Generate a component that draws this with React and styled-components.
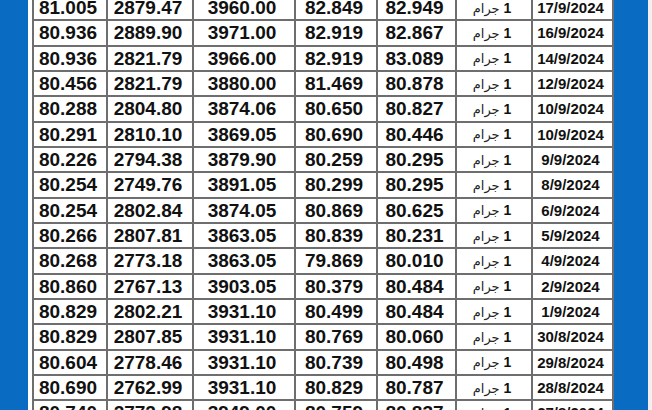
import React from "react";
import styled, { createGlobalStyle } from "styled-components";

const GlobalStyle = createGlobalStyle`
  html, body {
    margin: 0;
    padding: 0;
    background: #ffffff;
  }
  body {
    font-family: "Liberation Sans", Arial, "DejaVu Sans", sans-serif;
  }
`;

const rows = [
  ["81.005", "2879.47", "3960.00", "82.849", "82.949", "17/9/2024"],
  ["80.936", "2889.90", "3971.00", "82.919", "82.867", "16/9/2024"],
  ["80.936", "2821.79", "3966.00", "82.919", "83.089", "14/9/2024"],
  ["80.456", "2821.79", "3880.00", "81.469", "80.878", "12/9/2024"],
  ["80.288", "2804.80", "3874.06", "80.650", "80.827", "10/9/2024"],
  ["80.291", "2810.10", "3869.05", "80.690", "80.446", "10/9/2024"],
  ["80.226", "2794.38", "3879.90", "80.259", "80.295", "9/9/2024"],
  ["80.254", "2749.76", "3891.05", "80.299", "80.295", "8/9/2024"],
  ["80.254", "2802.84", "3874.05", "80.869", "80.625", "6/9/2024"],
  ["80.266", "2807.81", "3863.05", "80.839", "80.231", "5/9/2024"],
  ["80.268", "2773.18", "3863.05", "79.869", "80.010", "4/9/2024"],
  ["80.860", "2767.13", "3903.05", "80.379", "80.484", "2/9/2024"],
  ["80.829", "2802.21", "3931.10", "80.499", "80.484", "1/9/2024"],
  ["80.829", "2807.85", "3931.10", "80.769", "80.060", "30/8/2024"],
  ["80.604", "2778.46", "3931.10", "80.739", "80.498", "29/8/2024"],
  ["80.690", "2762.99", "3931.10", "80.829", "80.787", "28/8/2024"],
  ["80.740", "2772.98", "3949.00", "80.759", "80.837", "27/8/2024"],
];

const colWidths = [74, 86, 102, 82, 79, 76, 81];

const Page = styled.div`
  display: flex;
  width: 652px;
  height: 410px;
  overflow: hidden;
  background: #ffffff;
`;

const SideBar = styled.div`
  flex: 0 0 ${(p) => p.$w}px;
  background: #0a6bc3;
`;

const Edge = styled.div`
  flex: 1 1 auto;
  background: #f4eeee;
`;

const Gap = styled.div`
  flex: 0 0 ${(p) => p.$w}px;
`;

const Sheet = styled.table`
  flex: 0 0 582px;
  width: 582px;
  border-collapse: collapse;
  table-layout: fixed;
  margin-top: -6px;
  align-self: flex-start;
  color: #111111;
`;

const Row = styled.tr`
  height: 25.33px;
`;

const Cell = styled.td`
  border: 2px solid #6e6e6e;
  padding: 0 4px 0 0;
  text-align: center;
  vertical-align: middle;
  font-weight: bold;
  white-space: nowrap;
  overflow: hidden;
  line-height: 1;
  font-size: ${(p) => (p.$kind === "unit" ? 14 : p.$kind === "date" ? 15 : 19)}px;
`;

const UnitWord = styled.span`
  font-weight: normal;
  font-size: 13px;
  color: #222222;
`;

const App = () => {
  return (
    <>
      <GlobalStyle />
      <Page>
        <SideBar $w={28} />
        <Gap $w={4} />
        <Sheet>
          <colgroup>
            {colWidths.map((w, i) => (
              <col key={i} style={{ width: w }} />
            ))}
          </colgroup>
          <tbody>
            {rows.map((r, i) => (
              <Row key={i}>
                <Cell>{r[0]}</Cell>
                <Cell>{r[1]}</Cell>
                <Cell>{r[2]}</Cell>
                <Cell>{r[3]}</Cell>
                <Cell>{r[4]}</Cell>
                <Cell $kind="unit" dir="rtl">
                  1 <UnitWord>جرام</UnitWord>
                </Cell>
                <Cell $kind="date">{r[5]}</Cell>
              </Row>
            ))}
          </tbody>
        </Sheet>
        <SideBar $w={34} />
        <Edge />
      </Page>
    </>
  );
};

export default App;
